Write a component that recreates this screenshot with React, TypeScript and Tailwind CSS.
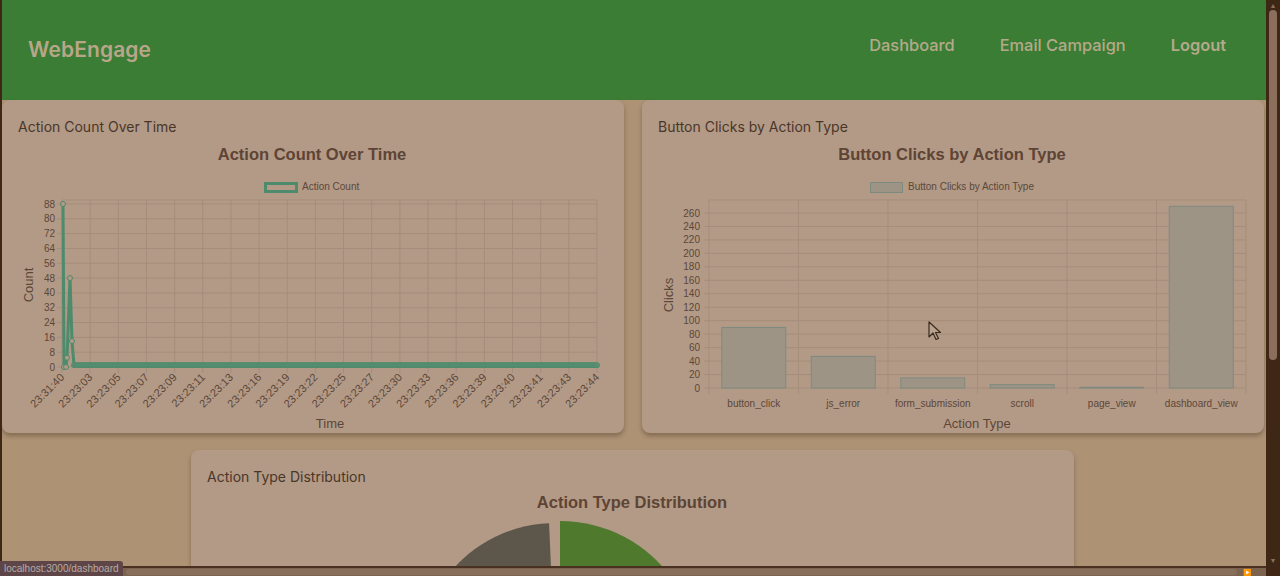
import React from "react";

const GRID = "#a48d7a";
const TICK = "#5c4738";
const TITLE = "#5e4434";
const LINE_GREEN = "#4e8a6c";
const CARD_BG = "#b39a87";
const FONT = "'Liberation Sans', Arial, sans-serif";

const sector = (cx: number, cy: number, r: number, a0: number, a1: number) => {
  const rad = (a: number) => (a * Math.PI) / 180;
  const x0 = cx + r * Math.cos(rad(a0));
  const y0 = cy + r * Math.sin(rad(a0));
  const x1 = cx + r * Math.cos(rad(a1));
  const y1 = cy + r * Math.sin(rad(a1));
  const large = a1 - a0 > 180 ? 1 : 0;
  return `M${cx},${cy} L${x0},${y0} A${r},${r} 0 ${large} 1 ${x1},${y1} Z`;
};

const timeLabels = [
  "23:31:40", "23:23:03", "23:23:05", "23:23:07", "23:23:09", "23:23:11", "23:23:13",
  "23:23:16", "23:23:19", "23:23:22", "23:23:25", "23:23:27", "23:23:30", "23:23:33",
  "23:23:36", "23:23:39", "23:23:40", "23:23:41", "23:23:43", "23:23:44",
];

const ActionCountChart = () => {
  const yTicks = Array.from({ length: 12 }, (_, i) => 88 - i * 8);
  const y = (v: number) => 229 - v * (163 / 88);
  const xAt = (i: number) => 44 + i * (535 / 19);
  const flat = Array.from({ length: 262 }, (_, i) => 57 + i * 2);
  const spike = [
    [45, y(88)], [46, y(0)], [48, y(0)], [49, y(5)], [52, y(48)], [54, y(14)], [56, y(1)],
  ];
  const path =
    spike.map((p, i) => `${i ? "L" : "M"}${p[0]},${p[1]}`).join(" ") + ` L579,${y(1)}`;

  return (
    <svg width={590} height={295} fontFamily={FONT} className="block">
      <text x={294} y={22} textAnchor="middle" fontSize={16.5} fontWeight={700} fill={TITLE}>
        Action Count Over Time
      </text>
      <rect x={247.5} y={45.5} width={31} height={8} fill={CARD_BG} stroke={LINE_GREEN} strokeWidth={3} />
      <text x={284} y={52} fontSize={10} fill={TICK}>Action Count</text>

      {yTicks.map((v) => (
        <g key={v}>
          <line x1={39} x2={579} y1={y(v)} y2={y(v)} stroke={GRID} strokeWidth={1} />
          <text x={37} y={y(v) + 3.5} textAnchor="end" fontSize={10} fill={TICK}>{v}</text>
        </g>
      ))}
      <line x1={44} x2={579} y1={62} y2={62} stroke={GRID} strokeWidth={1} />
      {timeLabels.map((t, i) => (
        <g key={t + i}>
          <line x1={xAt(i)} x2={xAt(i)} y1={62} y2={235} stroke={GRID} strokeWidth={1} />
          <text
            transform={`translate(${xAt(i) + 3},${240}) rotate(-45)`}
            textAnchor="end"
            fontSize={11}
            fill={TICK}
          >
            {t}
          </text>
        </g>
      ))}

      <path d={path} fill="none" stroke={LINE_GREEN} strokeWidth={3} />
      {spike.map((p, i) => (
        <circle key={i} cx={p[0]} cy={p[1]} r={2.5} fill={CARD_BG} stroke={LINE_GREEN} strokeWidth={1} />
      ))}
      {flat.map((x) => (
        <circle key={x} cx={x} cy={y(1)} r={2.5} fill="#5f8f72" stroke={LINE_GREEN} strokeWidth={1} />
      ))}

      <text transform="translate(15,147) rotate(-90)" textAnchor="middle" fontSize={13} fill={TICK}>Count</text>
      <text x={312} y={290} textAnchor="middle" fontSize={13} fill={TICK}>Time</text>
    </svg>
  );
};

const bars = [
  { label: "button_click", value: 90 },
  { label: "js_error", value: 47 },
  { label: "form_submission", value: 15 },
  { label: "scroll", value: 5 },
  { label: "page_view", value: 1 },
  { label: "dashboard_view", value: 270 },
];

const ButtonClicksChart = () => {
  const yTicks = Array.from({ length: 14 }, (_, i) => 260 - i * 20);
  const y = (v: number) => 250 - v * 0.673;
  const cat = 537 / 6;
  return (
    <svg width={590} height={295} fontFamily={FONT} className="block">
      <text x={294} y={22} textAnchor="middle" fontSize={16.5} fontWeight={700} fill={TITLE}>
        Button Clicks by Action Type
      </text>
      <rect x={212.5} y={44.5} width={32} height={10} fill="#9e9486" stroke="#7d8a80" strokeWidth={1} />
      <text x={250} y={52} fontSize={10} fill={TICK}>Button Clicks by Action Type</text>

      {yTicks.map((v) => (
        <g key={v}>
          <line x1={46} x2={588} y1={y(v)} y2={y(v)} stroke={GRID} strokeWidth={1} />
          <text x={42} y={y(v) + 3.5} textAnchor="end" fontSize={10} fill={TICK}>{v}</text>
        </g>
      ))}
      <line x1={51} x2={588} y1={62} y2={62} stroke={GRID} strokeWidth={1} />
      {Array.from({ length: 7 }, (_, i) => (
        <line key={i} x1={51 + i * cat} x2={51 + i * cat} y1={62} y2={256} stroke={GRID} strokeWidth={1} />
      ))}
      {bars.map((b, i) => {
        const cx = 51 + cat / 2 + i * cat;
        return (
          <g key={b.label}>
            <rect
              x={cx - 32}
              y={y(b.value)}
              width={64}
              height={250 - y(b.value)}
              fill="#9e9486"
              stroke="#7d8a80"
              strokeWidth={1}
            />
            <text x={cx} y={269} textAnchor="middle" fontSize={10} fill={TICK}>{b.label}</text>
          </g>
        );
      })}

      <text transform="translate(15,157) rotate(-90)" textAnchor="middle" fontSize={13} fill={TICK}>Clicks</text>
      <text x={319} y={290} textAnchor="middle" fontSize={13} fill={TICK}>Action Type</text>
    </svg>
  );
};

const DistributionChart = () => (
  <svg width={851} height={320} fontFamily={FONT} className="block">
    <text x={425} y={20} textAnchor="middle" fontSize={16.5} fontWeight={700} fill={TITLE}>
      Action Type Distribution
    </text>
    <path d={sector(348, 171, 136, -200, -92.5)} fill="#5d564a" />
    <path d={sector(353, 171, 138, -90, 20)} fill="#4f7a2e" />
    <path d={sector(353, 171, 138, 20, 160)} fill="#7a6a5a" />
  </svg>
);

const Card = ({ title, children, className = "" }: { title: string; children: React.ReactNode; className?: string }) => (
  <div className={`rounded-lg bg-[#b39a87] px-4 pt-4 shadow-[0_3px_4px_rgba(60,40,20,0.35)] ${className}`}>
    <h3 className="font-[Inter] text-[14px] leading-[22px] text-[#4a3627]">{title}</h3>
    {children}
  </div>
);

const App = () => {
  return (
    <div className="relative flex h-[576px] w-[1280px] overflow-hidden bg-[#3e2815]">
      <div className="flex min-w-0 flex-1 flex-col pl-[2px]">
        <div className="min-h-0 flex-1 overflow-hidden bg-[#ad9274]">
          {/* Header */}
          <header className="flex h-[100px] items-center justify-between bg-[#3b7d34] pl-[26px] pr-[40px]">
            <span className="font-[Inter] text-[21px] font-semibold tracking-[0.1px] text-[#b8a68a]">WebEngage</span>
            <nav className="mb-[10px] flex items-center gap-[45px] font-[Inter] text-[16.4px] font-medium text-[#b5a98a]">
              <span>Dashboard</span>
              <span>Email Campaign</span>
              <span className="font-semibold">Logout</span>
            </nav>
          </header>

          <div className="grid grid-cols-[622px_622px] gap-[18px]">
            <Card title="Action Count Over Time" className="h-[333px]">
              <ActionCountChart />
            </Card>
            <Card title="Button Clicks by Action Type" className="h-[333px]">
              <ButtonClicksChart />
            </Card>
          </div>

          <Card title="Action Type Distribution" className="ml-[189px] mt-[17px] w-[883px]">
            <DistributionChart />
          </Card>
        </div>
        {/* horizontal scrollbar */}
        <div className="flex h-[10px] items-center border-t-2 border-[#4a3020] bg-[#7b634f] pl-[124px] pr-[14px]">
          <div className="h-[6px] flex-1 rounded-full bg-[#86705c]" />
          <span className="ml-[6px] text-[7px] leading-none text-[#a89280]">▶</span>
        </div>
      </div>

      {/* vertical scrollbar */}
      <div className="flex w-[14px] flex-col items-center bg-[#3e2815] pt-[2px]">
        <span className="text-[7px] leading-[7px] text-[#8b6f5c]">▲</span>
        <div className="mt-[1px] h-[350px] w-[8px] rounded-full bg-[#8b6f5c]" />
        <div className="flex-1" />
        <span className="mb-[12px] text-[7px] leading-[7px] text-[#8b6f5c]">▼</span>
      </div>

      {/* mouse cursor */}
      <svg className="absolute left-[928px] top-[321px]" width={14} height={20} viewBox="0 0 14 20">
        <path d="M1 1 L1 16 L5 12 L8 18.5 L10.5 17.5 L7.5 11.5 L12.5 11.5 Z" fill="#b8a28e" stroke="#3a2a1e" strokeWidth={1.2} strokeLinejoin="round" />
      </svg>

      {/* status bubble */}
      <div className="absolute bottom-0 left-0 flex h-[15px] items-center rounded-tr-[3px] bg-[#5e4648] px-[4px] font-['Liberation_Sans'] text-[10px] text-[#b9aaa6]">
        localhost:3000/dashboard
      </div>
    </div>
  );
};

export default App;
